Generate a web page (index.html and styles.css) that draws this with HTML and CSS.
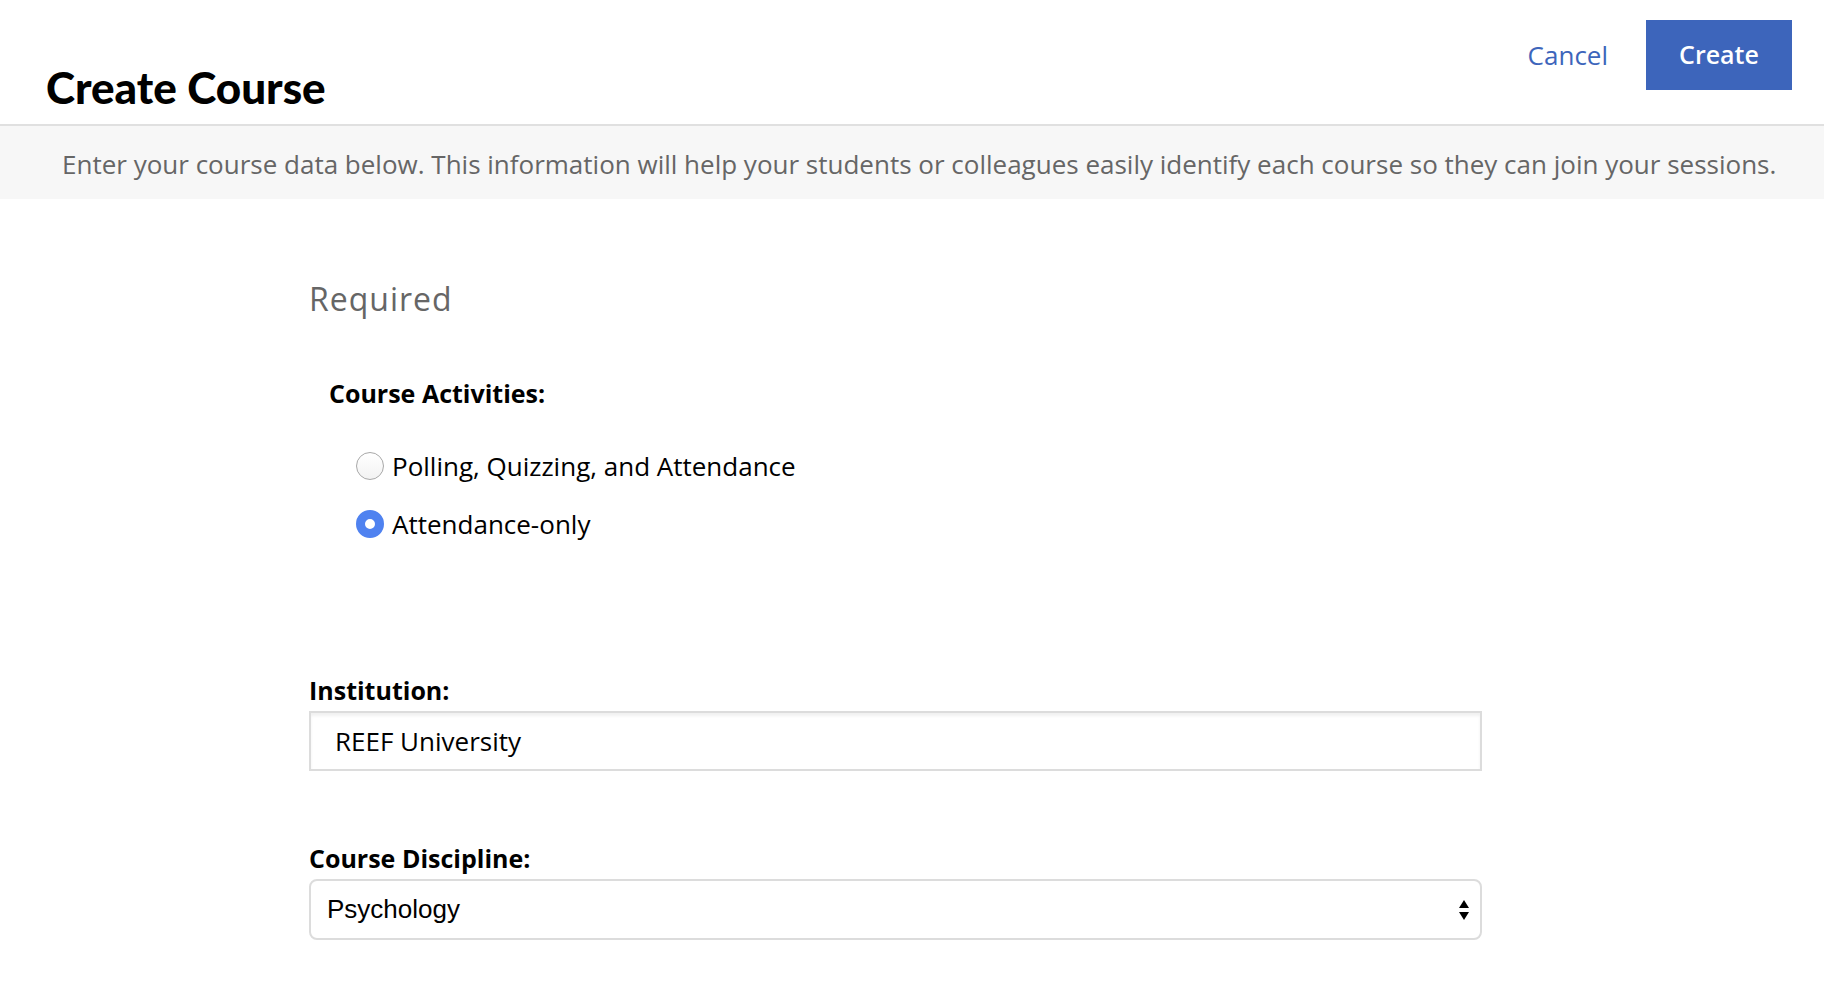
FILE: index.html
```html
<!DOCTYPE html>
<html>
	<head>
		<meta charset="UTF-8">
		<title>Create Course</title>
		<link rel="stylesheet" href="styles.css">
	</head>
	<body>
		<div class="header">
			<h1 class="title">Create Course</h1>
			<div class="actions">
				<a href="#" class="cancelBtn">Cancel</a>
				<a href="#" class="createBtn">Create</a>
			</div>
		</div>
		<div class="intro">
			Enter your course data below. This information will help your students or colleagues easily identify each course so they can join your sessions.
		</div>
		<div class="form">
			<h2 class="section">Required</h2>
			<div class="activities">
				<div class="label">Course Activities:</div>
				<label class="radio">
					<span class="dot"></span>
					Polling, Quizzing, and Attendance
				</label>
				<label class="radio">
					<span class="dot checked"></span>
					Attendance-only
				</label>
			</div>
			<div class="field">
				<div class="label">Institution:</div>
				<div class="textbox">REEF University</div>
			</div>
			<div class="field">
				<div class="label">Course Discipline:</div>
				<div class="selectbox">
					<span>Psychology</span>
					<svg class="arrows" width="12" height="24" viewBox="0 0 12 24">
						<polygon points="6,2 11,10 1,10" fill="#000"/>
						<polygon points="1,14 11,14 6,22" fill="#000"/>
					</svg>
				</div>
			</div>
		</div>
	</body>
</html>
```

FILE: styles.css
```css
*{
	padding: 0;
	margin: 0;
	box-sizing: border-box;
}
body{
	font-family: "Open Sans", "Liberation Sans", sans-serif;
	color: #000;
	background: #fff;
}
a{
	text-decoration: none;
}
.header{
	display: flex;
	justify-content: space-between;
	align-items: flex-start;
	height: 126px;
	padding: 20px 32px 0 46px;
	border-bottom: 2px solid #e0e0e0;
}
.title{
	font-family: "Lato", sans-serif;
	font-weight: 900;
	font-size: 44px;
	margin-top: 52px;
	line-height: 30px;
}
.actions{
	display: flex;
	align-items: center;
}
.cancelBtn{
	color: #3d65bb;
	font-size: 26px;
	margin-right: 38px;
}
.createBtn{
	display: block;
	width: 146px;
	height: 70px;
	line-height: 68px;
	text-align: center;
	background: #3d65bb;
	color: #fff;
	font-size: 25px;
	font-weight: 600;
}
.intro{
	background: #f7f7f7;
	color: #666;
	font-size: 26px;
	height: 73px;
	line-height: 76px;
	padding-left: 62px;
	white-space: nowrap;
}
.form{
	padding-left: 309px;
	width: 1482px;
}
.section{
	font-weight: 400;
	font-size: 32px;
	letter-spacing: 1px;
	color: #666;
	line-height: 40px;
	margin-top: 80px;
}
.label{
	font-weight: 700;
	font-size: 25px;
	line-height: 30px;
}
.activities{
	padding-left: 20px;
	margin-top: 59px;
}
.radio{
	display: flex;
	align-items: center;
	font-size: 26px;
	line-height: 34px;
	padding-left: 27px;
	margin-top: 24px;
}
.activities .label + .radio{
	margin-top: 41px;
}
.dot{
	width: 28px;
	height: 28px;
	border-radius: 50%;
	border: 1px solid #a8a8a8;
	background: linear-gradient(#fff, #f2f2f2);
	margin-right: 8px;
}
.dot.checked{
	border: 9px solid #4f82f0;
	background: #fff;
}
.field{
	margin-top: 72px;
}
.activities + .field{
	margin-top: 134px;
}
.field .label{
	margin-bottom: 6px;
}
.textbox{
	height: 60px;
	border: 2px solid #dcdcdc;
	box-shadow: inset 0 3px 3px rgba(0,0,0,0.06);
	padding-left: 24px;
	font-size: 26px;
	line-height: 56px;
}
.selectbox{
	display: flex;
	justify-content: space-between;
	align-items: center;
	height: 61px;
	border: 2px solid #dcdcdc;
	border-radius: 8px;
	padding: 0 10px 0 16px;
	font-family: "Liberation Sans", Arial, sans-serif;
	font-size: 26px;
}
```
